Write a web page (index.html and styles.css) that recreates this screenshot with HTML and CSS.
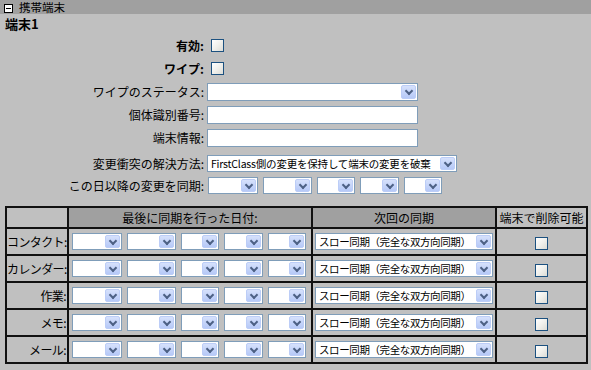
FILE: index.html
```html
<!DOCTYPE html>
<html lang="ja">
<head>
  <meta charset="UTF-8">
  <title>携帯端末</title>
  <link rel="stylesheet" href="styles.css">
</head>
<body>

  <!-- タイトルバー -->
  <div class="bar"><span class="toggle"></span><span class="bar-title">携帯端末</span></div>

  <div class="device">
    <h2>端末1</h2>

    <!-- 端末の設定 -->
    <div class="row r-check">
      <span class="lbl bold">有効:</span>
      <span class="check"></span>
    </div>
    <div class="row r-check">
      <span class="lbl bold">ワイプ:</span>
      <span class="check"></span>
    </div>
    <div class="row r-field">
      <span class="lbl">ワイプのステータス:</span>
      <span class="sel status"><span class="txt"></span><span class="arrow"></span></span>
    </div>
    <div class="row r-field">
      <span class="lbl">個体識別番号:</span>
      <span class="inp"></span>
    </div>
    <div class="row r-field">
      <span class="lbl">端末情報:</span>
      <span class="inp"></span>
    </div>
    <div class="row r-resolve">
      <span class="lbl">変更衝突の解決方法:</span>
      <span class="sel resolve"><span class="txt">FirstClass側の変更を保持して端末の変更を破棄</span><span class="arrow"></span></span>
    </div>
    <div class="row r-date">
      <span class="lbl">この日以降の変更を同期:</span>
      <span class="dates">
        <span class="sel d1"><span class="txt"></span><span class="arrow"></span></span>
        <span class="sel d2"><span class="txt"></span><span class="arrow"></span></span>
        <span class="sel d3"><span class="txt"></span><span class="arrow"></span></span>
        <span class="sel d4"><span class="txt"></span><span class="arrow"></span></span>
        <span class="sel d5"><span class="txt"></span><span class="arrow"></span></span>
      </span>
    </div>

    <!-- 同期テーブル -->
    <table class="sync">
      <colgroup>
        <col class="c1">
        <col class="c2">
        <col class="c3">
        <col class="c4">
      </colgroup>
      <tr class="head">
        <th></th>
        <th class="dark">最後に同期を行った日付:</th>
        <th class="dark">次回の同期</th>
        <th>端末で削除可能</th>
      </tr>
      <tr>
        <td class="name">コンタクト:</td>
        <td class="when">
          <span class="dates">
            <span class="sel d1"><span class="txt"></span><span class="arrow"></span></span>
            <span class="sel d2"><span class="txt"></span><span class="arrow"></span></span>
            <span class="sel d3"><span class="txt"></span><span class="arrow"></span></span>
            <span class="sel d4"><span class="txt"></span><span class="arrow"></span></span>
            <span class="sel d5"><span class="txt"></span><span class="arrow"></span></span>
          </span>
        </td>
        <td class="next"><span class="sel nx"><span class="txt">スロー同期（完全な双方向同期）</span><span class="arrow"></span></span></td>
        <td class="del"><span class="check"></span></td>
      </tr>
      <tr>
        <td class="name">カレンダー:</td>
        <td class="when">
          <span class="dates">
            <span class="sel d1"><span class="txt"></span><span class="arrow"></span></span>
            <span class="sel d2"><span class="txt"></span><span class="arrow"></span></span>
            <span class="sel d3"><span class="txt"></span><span class="arrow"></span></span>
            <span class="sel d4"><span class="txt"></span><span class="arrow"></span></span>
            <span class="sel d5"><span class="txt"></span><span class="arrow"></span></span>
          </span>
        </td>
        <td class="next"><span class="sel nx"><span class="txt">スロー同期（完全な双方向同期）</span><span class="arrow"></span></span></td>
        <td class="del"><span class="check"></span></td>
      </tr>
      <tr>
        <td class="name">作業:</td>
        <td class="when">
          <span class="dates">
            <span class="sel d1"><span class="txt"></span><span class="arrow"></span></span>
            <span class="sel d2"><span class="txt"></span><span class="arrow"></span></span>
            <span class="sel d3"><span class="txt"></span><span class="arrow"></span></span>
            <span class="sel d4"><span class="txt"></span><span class="arrow"></span></span>
            <span class="sel d5"><span class="txt"></span><span class="arrow"></span></span>
          </span>
        </td>
        <td class="next"><span class="sel nx"><span class="txt">スロー同期（完全な双方向同期）</span><span class="arrow"></span></span></td>
        <td class="del"><span class="check"></span></td>
      </tr>
      <tr>
        <td class="name">メモ:</td>
        <td class="when">
          <span class="dates">
            <span class="sel d1"><span class="txt"></span><span class="arrow"></span></span>
            <span class="sel d2"><span class="txt"></span><span class="arrow"></span></span>
            <span class="sel d3"><span class="txt"></span><span class="arrow"></span></span>
            <span class="sel d4"><span class="txt"></span><span class="arrow"></span></span>
            <span class="sel d5"><span class="txt"></span><span class="arrow"></span></span>
          </span>
        </td>
        <td class="next"><span class="sel nx"><span class="txt">スロー同期（完全な双方向同期）</span><span class="arrow"></span></span></td>
        <td class="del"><span class="check"></span></td>
      </tr>
      <tr>
        <td class="name">メール:</td>
        <td class="when">
          <span class="dates">
            <span class="sel d1"><span class="txt"></span><span class="arrow"></span></span>
            <span class="sel d2"><span class="txt"></span><span class="arrow"></span></span>
            <span class="sel d3"><span class="txt"></span><span class="arrow"></span></span>
            <span class="sel d4"><span class="txt"></span><span class="arrow"></span></span>
            <span class="sel d5"><span class="txt"></span><span class="arrow"></span></span>
          </span>
        </td>
        <td class="next"><span class="sel nx"><span class="txt">スロー同期（完全な双方向同期）</span><span class="arrow"></span></span></td>
        <td class="del"><span class="check"></span></td>
      </tr>
    </table>
  </div>

</body>
</html>
```

FILE: styles.css
```css
html, body {
  margin: 0;
  padding: 0;
  background: #c0c0c0;
  font-family: "Noto Sans CJK JP", "DejaVu Sans", sans-serif;
  font-size: 12px;
  color: #000;
}

/* タイトルバー */
.bar {
  height: 14px;
  background: #a0a0a0;
  display: flex;
  align-items: flex-start;
}

.toggle {
  position: relative;
  flex: none;
  width: 7px;
  height: 7px;
  margin: 4px 6px 0 4px;
  border: 1px solid #000;
  background: #fff;
}

.toggle::after {
  content: "";
  position: absolute;
  left: 1px;
  right: 1px;
  top: 3px;
  height: 1px;
  background: #000;
}

.bar-title {
  font-size: 11.5px;
  line-height: 15px;
}

.device h2 {
  margin: 0;
  padding: 3px 0 0 5px;
  height: 17px;
  line-height: 14px;
  font-size: 13px;
  font-weight: bold;
}

/* フォームの行 */
.row {
  display: flex;
  align-items: center;
}

.r-check { height: 23px; }
.r-field { height: 23px; }
.r-resolve { height: 28px; }
.r-date { height: 17px; }

.lbl {
  width: 204px;
  flex: none;
  text-align: right;
  white-space: nowrap;
  margin-right: 3px;
}

.bold { font-weight: bold; }

/* チェックボックス */
.check {
  display: inline-block;
  width: 11px;
  height: 11px;
  border: 1px solid #1c5180;
  background: linear-gradient(135deg, #ffffff 0%, #f0f0ec 50%, #dcdcd6 100%);
}

.r-check .check { margin-left: 4px; }

/* テキスト入力 */
.inp {
  display: block;
  box-sizing: border-box;
  width: 211px;
  height: 18px;
  border: 1px solid #7f9db9;
  background: #fff;
}

/* セレクトボックス */
.sel {
  display: flex;
  align-items: center;
  box-sizing: border-box;
  height: 17px;
  border: 1px solid #7f9db9;
  background: #fff;
  padding: 1px;
  flex: none;
}

.sel .txt {
  flex: 1;
  overflow: hidden;
  white-space: nowrap;
  font-size: 10.5px;
  line-height: 13px;
  padding-left: 2px;
}

.sel .arrow {
  position: relative;
  flex: none;
  width: 15px;
  height: 100%;
  box-sizing: border-box;
  border: 1px solid #bccdf7;
  border-radius: 2px;
  background: linear-gradient(to bottom, #d6e1fc, #b6c9f7);
}

.sel .arrow::after {
  content: "";
  position: absolute;
  left: 4px;
  top: 2px;
  width: 4px;
  height: 4px;
  border-right: 2px solid #4d6185;
  border-bottom: 2px solid #4d6185;
  transform: rotate(45deg);
}

.status { width: 211px; height: 18px; }
.resolve { width: 250px; }
.resolve .txt { letter-spacing: -0.2px; }

.dates {
  display: flex;
  gap: 5px;
}

.d1 { width: 50px; }
.d2 { width: 49px; }
.d3 { width: 38px; }
.d4 { width: 39px; }
.d5 { width: 38px; }

.r-date .dates { margin-left: 1px; }

/* 同期テーブル */
.sync {
  margin: 12px 0 0 5px;
  width: 581px;
  table-layout: fixed;
  border-collapse: collapse;
  border: 2px solid #000;
}

.sync .c1 { width: 62px; }
.sync .c2 { width: 244px; }
.sync .c3 { width: 184px; }
.sync .c4 { width: 91px; }

.sync th,
.sync td {
  border: 2px solid #111;
  padding: 0;
  font-weight: normal;
}

.sync .head th {
  height: 19px;
  text-align: center;
  white-space: nowrap;
}

.sync .dark { background: #a0a0a0; }

.sync td { height: 25px; }

.sync .name {
  text-align: right;
  padding-right: 1px;
  white-space: nowrap;
  letter-spacing: -0.6px;
}

.sync .when { padding-left: 3px; }

.sync .next { padding-left: 2px; }

.nx { width: 178px; }
.nx .txt { letter-spacing: -0.4px; }

.sync .del { text-align: center; }
.sync .del .check { vertical-align: middle; }
```
